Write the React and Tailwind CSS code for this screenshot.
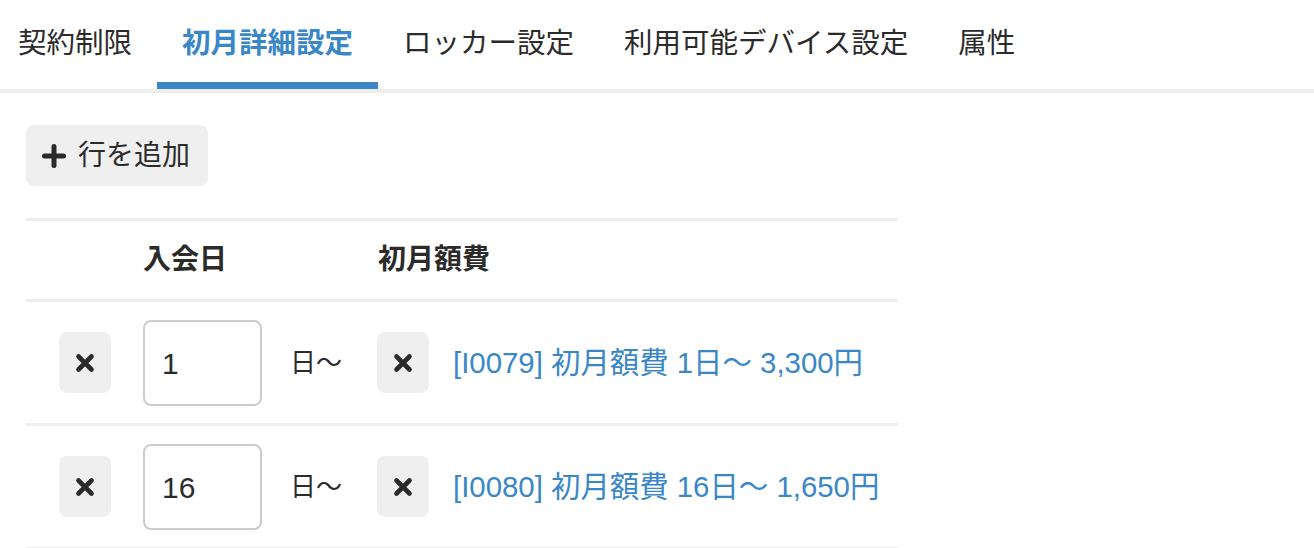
import React from "react";

const font = { fontFamily: '"Liberation Sans", "Noto Sans CJK JP", sans-serif' };

function XIcon() {
  return (
    <svg width="20" height="20" viewBox="0 0 20 20" aria-hidden="true">
      <path d="M3.5 3.5 L16.5 16.5 M16.5 3.5 L3.5 16.5" stroke="#2a2a2a" strokeWidth="4.6" strokeLinecap="round" fill="none" />
    </svg>
  );
}

function PlusIcon() {
  return (
    <svg width="24" height="24" viewBox="0 0 24 24" aria-hidden="true">
      <path d="M12 2.5 V21.5 M2.5 12 H21.5" stroke="#2a2a2a" strokeWidth="5" strokeLinecap="round" fill="none" />
    </svg>
  );
}

function XButton() {
  return (
    <button className="w-[52px] h-[61px] rounded-[8px] bg-[#efefef] flex items-center justify-center">
      <XIcon />
    </button>
  );
}

const tabs = ["契約制限", "初月詳細設定", "ロッカー設定", "利用可能デバイス設定", "属性"];

const rows = [
  { day: "1", label: "[I0079] 初月額費 1日〜 3,300円" },
  { day: "16", label: "[I0080] 初月額費 16日〜 1,650円" },
];

export default function App() {
  return (
    <div className="w-[1314px] h-[548px] bg-white overflow-hidden text-[#2b2b2b]" style={font}>
      <nav className="flex border-b-[4px] border-[#eeeeee] pl-0">
        <div className="flex ml-[-7px]">
          {tabs.map((t, i) => (
            <div
              key={t}
              className={
                "h-[89px] px-[25px] pt-[5px] flex items-center text-[28.5px] leading-none border-b-[7px] " +
                (i === 1 ? "border-[#3a87c8] text-[#3a87c8] font-bold" : "border-transparent")
              }
            >
              {t}
            </div>
          ))}
        </div>
      </nav>
      <div className="px-[26px] pt-[32px]">
        <button className="h-[61px] w-[182px] rounded-[8px] bg-[#efefef] flex items-center pl-[16px] gap-[12px] text-[28px] leading-none">
          <PlusIcon />
          <span>行を追加</span>
        </button>
        <div className="mt-[32px] w-[872px] border-t-[3px] border-[#eeeeee]">
          <div className="flex items-center h-[81px] border-b-[3px] border-[#eeeeee] text-[28px] font-bold leading-none">
            <div className="w-[117px]" />
            <div className="w-[234px]">入会日</div>
            <div className="pl-[1px]">初月額費</div>
          </div>
          {rows.map((r) => (
            <div key={r.day} className="flex items-center h-[124px] border-b-[3px] border-[#eeeeee]">
              <div className="w-[117px] flex justify-center">
                <XButton />
              </div>
              <div className="w-[234px] flex items-center">
                <div className="w-[119px] h-[86px] border-2 border-[#cccccc] rounded-[8px] flex items-center pl-[17px] pt-[2px] text-[30px] leading-none">
                  {r.day}
                </div>
                <span className="ml-[28px] text-[26px] leading-none">日〜</span>
              </div>
              <div className="flex items-center">
                <XButton />
                <a className="ml-[24px] text-[29.4px] leading-none text-[#3a87c8]">{r.label}</a>
              </div>
            </div>
          ))}
        </div>
      </div>
    </div>
  );
}
